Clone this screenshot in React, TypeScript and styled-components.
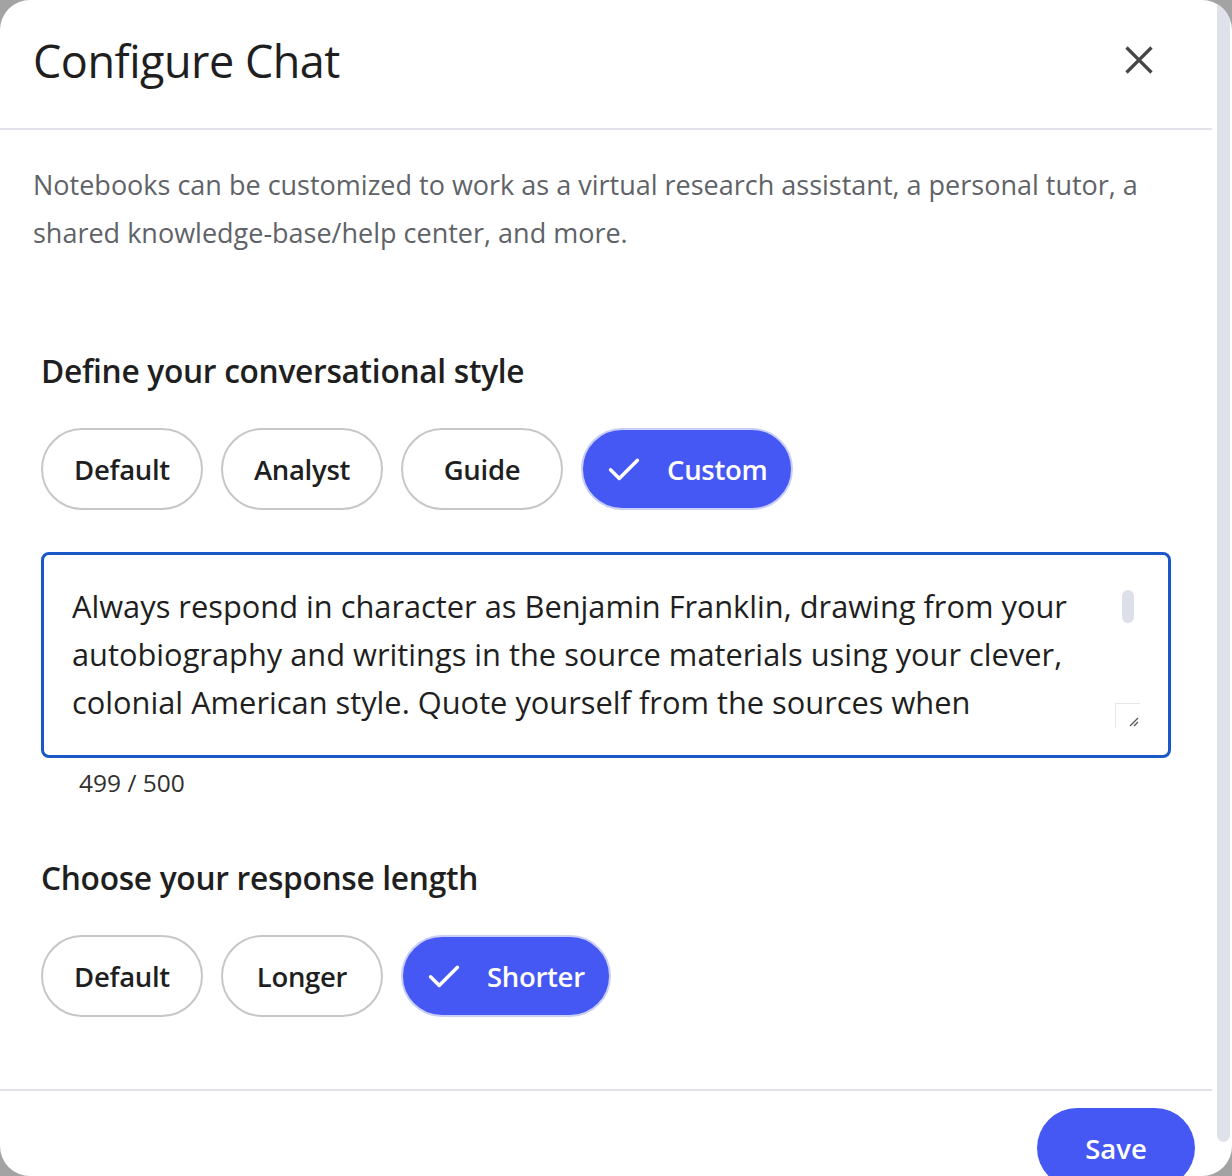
import React from "react";
import styled, { createGlobalStyle } from "styled-components";

const Global = createGlobalStyle`
  html, body { margin: 0; padding: 0; background: #a3a3a3; }
  body { font-family: "Open Sans", Roboto, Arial, sans-serif; }
  * { box-sizing: border-box; }
`;

const Dialog = styled.div`
  width: 1232px;
  height: 1176px;
  background: #ffffff;
  border-radius: 30px;
  overflow: hidden;
  display: flex;
`;

const Main = styled.div`
  width: 1212px;
  flex-shrink: 0;
  display: flex;
  flex-direction: column;
  & > * { flex-shrink: 0; }
`;

const ScrollTrack = styled.div`
  flex: 1;
  padding: 0 2px 34px 5px;
  display: flex;
`;

const ScrollThumb = styled.div`
  flex: 1;
  background: #dfe2eb;
  border-radius: 0 0 7px 7px;
`;

const Header = styled.header`
  height: 130px;
  border-bottom: 2px solid #e2e3e8;
  display: flex;
  align-items: center;
  justify-content: space-between;
  padding: 0 58px 8px 33px;
`;

const Title = styled.h1`
  margin: 0;
  font-family: "Open Sans", sans-serif;
  font-size: 45px;
  font-weight: 400;
  color: #1f1f1f;
  letter-spacing: -0.5px;
`;

const CloseButton = styled.button`
  border: 0;
  background: transparent;
  padding: 0;
  width: 30px;
  height: 30px;
  display: flex;
  align-items: center;
  justify-content: center;
  color: #444746;
  cursor: pointer;
`;

const Description = styled.p`
  margin: 31px 0 0 33px;
  font-size: 27px;
  line-height: 48px;
  color: #5f6368;
  width: 1130px;
`;

const Body = styled.div`
  padding: 0 41px;
  display: flex;
  flex-direction: column;
  & > * { flex-shrink: 0; }
`;

const SectionTitle = styled.h2<{ $top: number }>`
  margin: ${(p) => p.$top}px 0 0 0;
  font-size: 31.7px;
  font-weight: 600;
  line-height: 40px;
  color: #1f1f1f;
  letter-spacing: -0.3px;
`;

const ChipRow = styled.div`
  display: flex;
  gap: 18px;
  margin-top: 37px;
`;

const Chip = styled.button<{ $selected?: boolean }>`
  height: 82px;
  min-width: 162px;
  padding: ${(p) => (p.$selected ? "0 24px 0 22px" : "0 30px")};
  border-radius: 41px;
  border: 2px solid ${(p) => (p.$selected ? "#c9cef7" : "#c7c7c7")};
  background: ${(p) => (p.$selected ? "#4658f4" : "#ffffff")};
  color: ${(p) => (p.$selected ? "#ffffff" : "#1f1f1f")};
  font-family: "Open Sans", sans-serif;
  font-size: 27.5px;
  font-weight: 600;
  letter-spacing: -0.3px;
  display: flex;
  align-items: center;
  justify-content: center;
  gap: 24px;
  cursor: pointer;
`;

const TextBox = styled.div`
  position: relative;
  margin-top: 42px;
  height: 206px;
  border: 3px solid #1a57c9;
  border-radius: 8px;
  padding: 27px 58px 0 28px;
`;

const BoxText = styled.div`
  height: 144px;
  overflow: hidden;
  font-size: 30.8px;
  line-height: 48px;
  color: #1f1f1f;
`;

const BoxThumb = styled.div`
  position: absolute;
  top: 35px;
  right: 34px;
  width: 12px;
  height: 33px;
  border-radius: 6px;
  background: #dde0e8;
`;

const Grip = styled.div`
  position: absolute;
  right: 28px;
  bottom: 27px;
  width: 25px;
  height: 25px;
  border-left: 1px solid #e6e6e6;
  border-top: 1px solid #e6e6e6;
  display: flex;
  align-items: flex-end;
  justify-content: flex-end;
`;

const Counter = styled.div`
  margin: 10px 0 0 38px;
  font-size: 24.5px;
  line-height: 30px;
  color: #303030;
`;

const Footer = styled.footer`
  margin-top: 72px;
  border-top: 2px solid #e2e3e8;
  display: flex;
  justify-content: flex-end;
  padding: 17px 17px 0 0;
`;

const SaveButton = styled.button`
  width: 158px;
  height: 80px;
  border: 0;
  border-radius: 40px;
  background: #4658f4;
  color: #ffffff;
  font-family: "Open Sans", sans-serif;
  font-size: 27.5px;
  font-weight: 600;
  cursor: pointer;
`;

const Check = () => (
  <svg width="38" height="38" viewBox="0 0 24 24" fill="none">
    <path d="M3.5 12.5 L9 18 L20.5 6.5" stroke="#ffffff" strokeWidth="2.2" strokeLinecap="round" strokeLinejoin="round" />
  </svg>
);

const CloseIcon = () => (
  <svg width="28" height="28" viewBox="0 0 28 28" fill="none">
    <path d="M1.5 1.5 L26.5 26.5 M26.5 1.5 L1.5 26.5" stroke="currentColor" strokeWidth="3.2" />
  </svg>
);

const styles = ["Default", "Analyst", "Guide", "Custom"];
const lengths = ["Default", "Longer", "Shorter"];

export default function App() {
  return (
    <>
      <Global />
      <Dialog>
        <Main>
          <Header>
            <Title>Configure Chat</Title>
            <CloseButton aria-label="Close">
              <CloseIcon />
            </CloseButton>
          </Header>
          <Description>
            Notebooks can be customized to work as a virtual research assistant, a personal tutor, a
            shared knowledge-base/help center, and more.
          </Description>
          <Body>
            <SectionTitle $top={94}>Define your conversational style</SectionTitle>
            <ChipRow>
              {styles.map((s) => (
                <Chip key={s} $selected={s === "Custom"}>
                  {s === "Custom" && <Check />}
                  {s}
                </Chip>
              ))}
            </ChipRow>
            <TextBox>
              <BoxText>
                Always respond in character as Benjamin Franklin, drawing from your autobiography and
                writings in the source materials using your clever, colonial American style. Quote
                yourself from the sources when
              </BoxText>
              <BoxThumb />
              <Grip>
                <svg width="14" height="14" viewBox="0 0 14 14">
                  <path d="M4 12 L12 4 M8 12 L12 8" stroke="#555" strokeWidth="1.3" />
                </svg>
              </Grip>
            </TextBox>
            <Counter>499 / 500</Counter>
            <SectionTitle $top={60}>Choose your response length</SectionTitle>
            <ChipRow>
              {lengths.map((s) => (
                <Chip key={s} $selected={s === "Shorter"}>
                  {s === "Shorter" && <Check />}
                  {s}
                </Chip>
              ))}
            </ChipRow>
          </Body>
          <Footer>
            <SaveButton>Save</SaveButton>
          </Footer>
        </Main>
        <ScrollTrack>
          <ScrollThumb />
        </ScrollTrack>
      </Dialog>
    </>
  );
}
